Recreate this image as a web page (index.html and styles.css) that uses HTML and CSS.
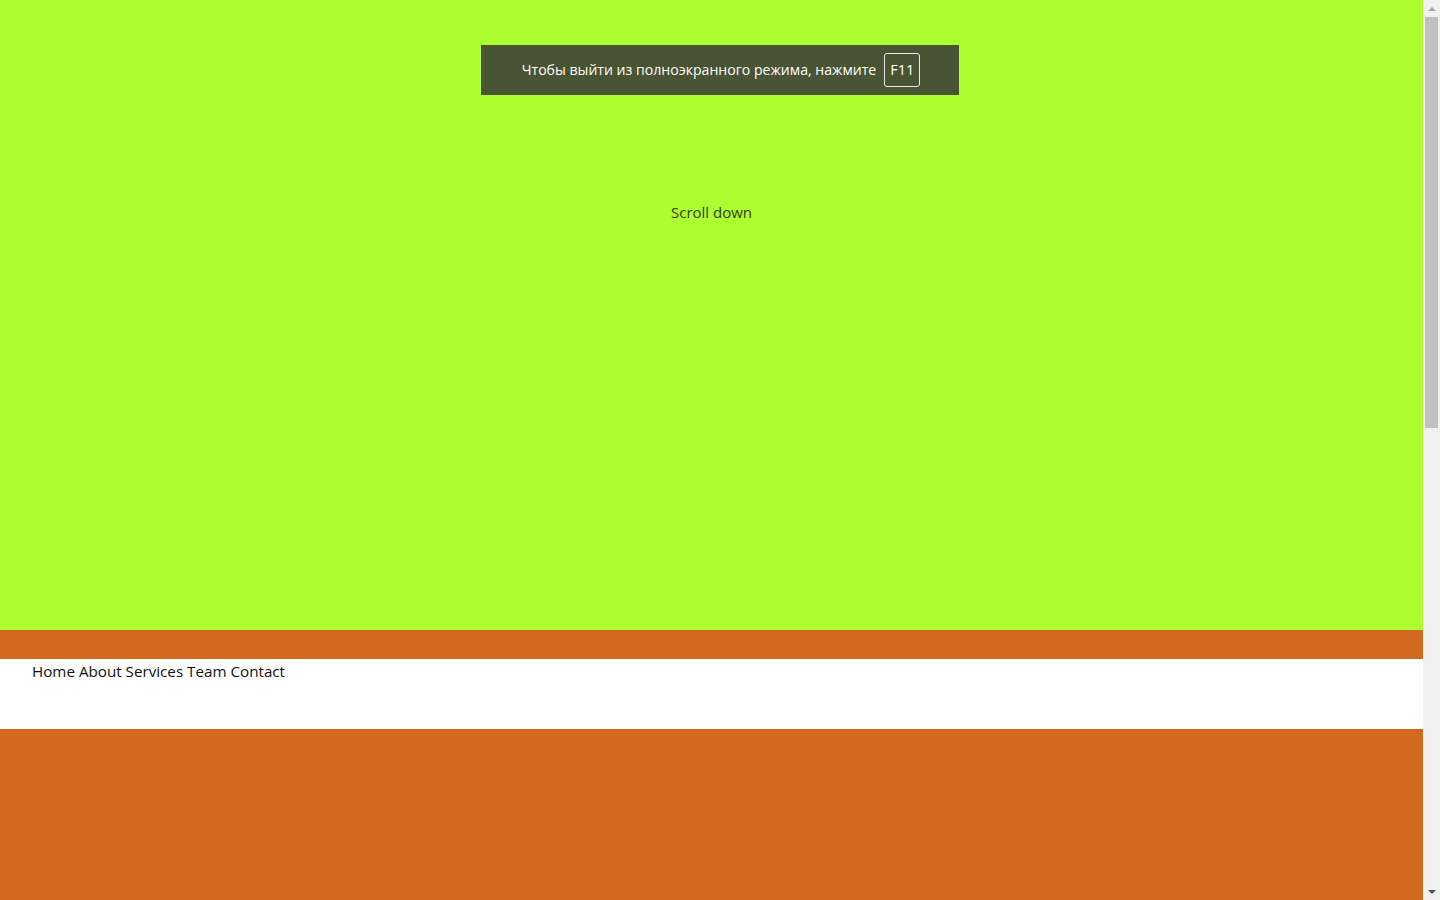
FILE: index.html
```html
<!DOCTYPE html>
<html lang="ru">
<head>
<meta charset="utf-8">
<title>Scroll</title>
<link rel="stylesheet" href="styles.css">
</head>
<body>
<div class="page">
  <section class="hero">
    <p class="hint">Scroll down</p>
  </section>
  <div class="band"></div>
  <nav class="nav">
    <a href="#">Home</a> <a href="#">About</a> <a href="#">Services</a> <a href="#">Team</a> <a href="#">Contact</a>
  </nav>
  <section class="rest"></section>
</div>
<div class="fs-toast">
  <span class="fs-text">Чтобы выйти из полноэкранного режима, нажмите</span>
  <span class="fs-key">F11</span>
</div>
<div class="scrollbar">
  <div class="sb-arrow sb-up"></div>
  <div class="sb-track"><div class="sb-thumb"></div></div>
  <div class="sb-arrow sb-down"></div>
</div>
</body>
</html>
```

FILE: styles.css
```css
html, body {
  margin: 0;
  padding: 0;
  height: 100%;
  overflow: hidden;
}
body {
  font-family: "Open Sans", "Noto Sans", sans-serif;
  font-size: 16px;
  color: #222;
}
.page {
  width: 1423px;
  height: 900px;
  display: flex;
  flex-direction: column;
}
.hero {
  height: 630px;
  flex: none;
  background: #adff2f;
  display: flex;
  justify-content: center;
  padding-top: 201px;
  box-sizing: border-box;
}
.hint {
  margin: 0;
  font-size: 15px;
  line-height: 22px;
  color: #3a3a1a;
}
.band {
  height: 29px;
  flex: none;
  background: #d2691e;
}
.nav {
  height: 70px;
  flex: none;
  background: #fff;
  padding-left: 32px;
  box-sizing: border-box;
  font-size: 15.2px;
  line-height: 24px;
}
.nav a {
  color: #111;
  text-decoration: none;
}
.rest {
  flex: 1;
  background: #d2691e;
}
.fs-toast {
  position: fixed;
  top: 45px;
  left: 481px;
  width: 478px;
  height: 50px;
  background: #485433;
  display: flex;
  align-items: center;
  justify-content: center;
  gap: 8px;
  color: #fff;
  font-size: 14.1px;
  line-height: 20px;
  box-sizing: border-box;
  padding-left: 2px;
  padding-bottom: 1px;
}
.fs-key {
  border: 1px solid #e8e8e8;
  border-radius: 3px;
  height: 34px;
  width: 36px;
  box-sizing: border-box;
  display: flex;
  align-items: center;
  justify-content: center;
  font-size: 14.5px;
}
.scrollbar {
  position: fixed;
  top: 0;
  right: 0;
  width: 17px;
  height: 900px;
  background: #f1f1f1;
  display: flex;
  flex-direction: column;
}
.sb-arrow {
  height: 17px;
  display: flex;
  align-items: center;
  justify-content: center;
}
.sb-up::before {
  content: "";
  border-left: 4px solid transparent;
  border-right: 4px solid transparent;
  border-bottom: 4px solid #a3a3a3;
}
.sb-down::before {
  content: "";
  border-left: 4px solid transparent;
  border-right: 4px solid transparent;
  border-top: 4px solid #505050;
}
.sb-track {
  flex: 1;
  padding: 0 2px;
}
.sb-thumb {
  height: 411px;
  background: #c1c1c1;
}
```
